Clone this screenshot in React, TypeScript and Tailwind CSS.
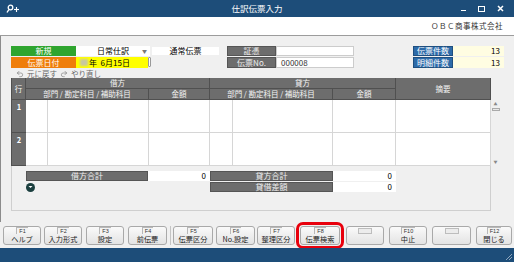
import React from "react";
import { Undo2, Redo2 } from "lucide-react";

const hdr =
  "bg-[#6d6d6d] text-[#f4f4f4] border-r border-b border-[#505050] flex items-center justify-center text-[7.5px] leading-none";

function FKey({ k, label, className = "" }: { k?: string; label?: string; className?: string }) {
  return (
    <div
      className={`h-[19px] shrink-0 rounded-[3px] border border-[#a9a9a9] bg-gradient-to-b from-[#fafafa] to-[#e3e3e3] flex flex-col items-center overflow-hidden ${className}`}
    >
      {k ? (
        <div className="h-[7px] px-[2px] border-t border-l border-[#b8b8b8] bg-[#f3f3f3] font-['Liberation_Sans',sans-serif] text-[5.5px] leading-[6px] text-[#333]">
          {k}
        </div>
      ) : (
        <div className="mt-[1px] h-[6px] w-[14px] border border-[#bdbdbd] bg-[#ececec]" />
      )}
      {label ? (
        <div className="h-[10px] text-[7.2px] leading-[10px] text-[#222] whitespace-nowrap">{label}</div>
      ) : null}
    </div>
  );
}

export default function App() {
  return (
    <div className="w-[514px] h-[262px] bg-[#f0f0f0] flex flex-col overflow-hidden font-['Noto_Sans_CJK_JP','Noto_Sans',sans-serif] text-[8px] text-black">
      {/* Title bar */}
      <div className="h-[17px] shrink-0 bg-[#1d4d79] relative flex items-center text-white">
        <svg width="14" height="10" viewBox="0 0 14 10" className="ml-[6px]">
          <circle cx="4.5" cy="3.5" r="2.3" fill="none" stroke="white" strokeWidth="1.3" />
          <line x1="3" y1="5.3" x2="1" y2="8.5" stroke="white" strokeWidth="1.4" />
          <line x1="8" y1="5.5" x2="13" y2="5.5" stroke="white" strokeWidth="1.1" />
          <line x1="10.5" y1="3" x2="10.5" y2="8" stroke="white" strokeWidth="1.1" />
        </svg>
        <div className="absolute left-0 right-0 text-center text-[8.5px] leading-none">仕訳伝票入力</div>
        <div className="ml-auto flex items-center gap-[12px] mr-[10px]">
          <div className="w-[5px] h-[1.5px] bg-white mt-[4px]" />
          <div className="w-[7px] h-[6px] border-[1.5px] border-white" />
          <svg width="7" height="7" viewBox="0 0 7 7">
            <path d="M1 1L6 6M6 1L1 6" stroke="white" strokeWidth="1.5" />
          </svg>
        </div>
      </div>

      {/* Company band */}
      <div className="h-[19px] shrink-0 bg-white border-b border-[#9c9c9c] flex items-center justify-end pr-[11px] text-[7.5px] text-[#333] tracking-[0.5px]">
        ＯＢＣ商事株式会社
      </div>

      {/* Main */}
      <div className="h-[186px] shrink-0 border-l border-[#8c8c8c] pt-[10px] pl-[10px] flex flex-col">
        {/* header rows */}
        <div className="flex h-[22px]">
          <div className="flex flex-col gap-[1px]">
            <div className="flex h-[10px]">
              <div className="w-[65px] bg-[#2fa52f] text-white flex items-center justify-center leading-none">新規</div>
              <div className="w-[74px] bg-white flex items-center justify-center relative leading-none">
                日常仕訳
                <span className="absolute right-[3px] top-[2px] text-[5px] text-[#777]">▼</span>
              </div>
              <div className="ml-[2px] mt-[1px] w-[67px] h-[8px] bg-white flex items-center justify-center leading-none">
                通常伝票
              </div>
            </div>
            <div className="flex h-[11px]">
              <div className="w-[65px] bg-[#ef7e0b] text-white flex items-center justify-center leading-none">伝票日付</div>
              <div className="w-[72px] bg-[#ffff00] flex items-center pl-[4px] leading-none">
                <span className="w-[8px] h-[7px] bg-[#c8c8a0] blur-[1px] mr-[1px]" />
                年&nbsp;&nbsp;6月15日
              </div>
              <div className="w-[3px] h-[10px] border border-[#999] bg-white rounded-[1px]" />
            </div>
          </div>

          <div className="ml-[8px] flex flex-col gap-[1px]">
            <div className="flex h-[10px]">
              <div className="w-[49px] bg-[#6d6d6d] text-[#eee] flex items-center justify-center leading-none border border-[#555]">証憑</div>
              <div className="w-[78px] bg-white border border-[#ccc]" />
            </div>
            <div className="flex h-[11px]">
              <div className="w-[49px] bg-[#6d6d6d] text-[#eee] flex items-center justify-center leading-none border border-[#555]">伝票No.</div>
              <div className="w-[78px] bg-white border border-[#ccc] flex items-center pl-[4px] leading-none text-[#333]">000008</div>
            </div>
          </div>

          <div className="ml-auto mr-[10px] flex flex-col gap-[1px]">
            <div className="flex h-[10px]">
              <div className="w-[40px] bg-[#2d6ba9] text-white flex items-center justify-center leading-none border border-[#1f4f80]">伝票件数</div>
              <div className="w-[51px] bg-[#fffde2] flex items-center justify-end pr-[4px] leading-none">13</div>
            </div>
            <div className="flex h-[11px]">
              <div className="w-[40px] bg-[#2d6ba9] text-white flex items-center justify-center leading-none border border-[#1f4f80]">明細件数</div>
              <div className="w-[51px] bg-[#fffde2] flex items-center justify-end pr-[4px] leading-none">13</div>
            </div>
          </div>
        </div>

        {/* undo row */}
        <div className="h-[10px] flex items-center pl-[5px] pt-[1px] text-[7.5px] text-[#666] leading-none">
          <Undo2 size={8} strokeWidth={1.6} className="text-[#666]" />
          <span className="ml-[3px] underline">元に戻す</span>
          <Redo2 size={8} strokeWidth={1.6} className="ml-[3px] text-[#666]" />
          <span className="ml-[3px] underline">やり直し</span>
        </div>

        {/* table */}
        <div className="flex">
          <div className="w-[480px] flex flex-col">
            <div className="flex h-[22px]">
              <div className={`${hdr} w-[15px] h-[22px] border-l`}>行</div>
              <div className="w-[184px] flex flex-col">
                <div className={`${hdr} h-[11px]`}>借方</div>
                <div className="flex h-[11px]">
                  <div className={`${hdr} w-[123px]`}>部門 / 勘定科目 / 補助科目</div>
                  <div className={`${hdr} w-[61px]`}>金額</div>
                </div>
              </div>
              <div className="w-[186px] flex flex-col">
                <div className={`${hdr} h-[11px]`}>貸方</div>
                <div className="flex h-[11px]">
                  <div className={`${hdr} w-[123px]`}>部門 / 勘定科目 / 補助科目</div>
                  <div className={`${hdr} w-[63px]`}>金額</div>
                </div>
              </div>
              <div className={`${hdr} w-[95px] h-[22px]`}>摘要</div>
            </div>
            {["1", "2"].map((n) => (
              <div key={n} className="flex h-[33px]">
                <div className="w-[15px] bg-[#6d6d6d] border-b border-l border-[#505050] text-white font-bold text-[7.5px] flex justify-center pt-[3px] leading-none">
                  {n}
                </div>
                <div className="w-[22px] bg-white border-r border-b border-[#d6d6d6]" />
                <div className="w-[101px] bg-white border-r border-b border-[#d6d6d6]" />
                <div className="w-[61px] bg-white border-r border-b border-[#d6d6d6]" />
                <div className="w-[23px] bg-white border-r border-b border-[#d6d6d6]" />
                <div className="w-[100px] bg-white border-r border-b border-[#d6d6d6]" />
                <div className="w-[63px] bg-white border-r border-b border-[#d6d6d6]" />
                <div className="w-[95px] bg-white border-r border-b border-[#d6d6d6]" />
              </div>
            ))}
            {/* totals */}
            <div className="h-[45px] border-x border-b border-[#cfcfcf] pt-[5px] flex flex-col gap-[1px]">
              <div className="flex h-[10px] ml-[14px]">
                <div className="w-[122px] bg-[#6d6d6d] text-[#eee] flex items-center justify-center leading-none border border-[#555]">借方合計</div>
                <div className="w-[62px] bg-white flex items-center justify-end pr-[4px] leading-none">0</div>
                <div className="w-[123px] bg-[#6d6d6d] text-[#eee] flex items-center justify-center leading-none border border-[#555]">貸方合計</div>
                <div className="w-[63px] bg-white flex items-center justify-end pr-[4px] leading-none">0</div>
              </div>
              <div className="flex h-[10px] ml-[14px]">
                <div className="w-[184px] flex items-center">
                  <div className="w-[9px] h-[9px] rounded-full bg-[#1b3f3f] flex items-center justify-center">
                    <svg width="5" height="4" viewBox="0 0 5 4">
                      <path d="M0.5 1L2.5 3L4.5 1Z" fill="white" />
                    </svg>
                  </div>
                </div>
                <div className="w-[123px] bg-[#6d6d6d] text-[#eee] flex items-center justify-center leading-none border border-[#555]">貸借差額</div>
                <div className="w-[63px] bg-white flex items-center justify-end pr-[4px] leading-none">0</div>
              </div>
            </div>
          </div>
          {/* scrollbar */}
          <div className="mt-[22px] w-[9px] h-[66px] flex flex-col items-center pt-[2px] text-[#888]">
            <span className="text-[4px] leading-none">▲</span>
            <div className="mt-[2px] w-[8px] h-[3px] border border-[#aaa] bg-[#e8e8e8]" />
            <span className="mt-auto mb-[2px] text-[4px] leading-none">▼</span>
          </div>
        </div>
      </div>

      {/* Function keys */}
      <div className="h-[26px] shrink-0 pt-[4px] flex items-start">
        <FKey k="F1" label="ヘルプ" className="ml-[3px] w-[38px]" />
        <FKey k="F2" label="入力形式" className="ml-[3px] w-[38px]" />
        <FKey k="F3" label="設定" className="ml-[4px] w-[38px]" />
        <FKey k="F4" label="前伝票" className="ml-[4px] w-[39px]" />
        <div className="ml-[3px] w-[1px] h-[19px] bg-[#c4c4c4]" />
        <FKey k="F5" label="伝票区分" className="ml-[2px] w-[40px]" />
        <FKey k="F6" label="No.設定" className="ml-[3px] w-[39px]" />
        <FKey k="F7" label="整理区分" className="ml-[2px] w-[38px]" />
        <FKey
          k="F8"
          label="伝票検索"
          className="ml-[5px] w-[40px] outline-[3px] outline-solid outline-[#e8000c] outline-offset-[1px]"
        />
        <FKey className="ml-[6px] w-[38px]" />
        <FKey k="F10" label="中止" className="ml-[5px] w-[38px]" />
        <FKey className="ml-[5px] w-[39px]" />
        <FKey k="F12" label="閉じる" className="ml-[5px] w-[36px]" />
      </div>

      {/* Status bar */}
      <div className="h-[14px] shrink-0 bg-[#1d4d79] flex justify-end items-end">
        <svg width="8" height="8" viewBox="0 0 8 8" className="mr-[1px] mb-[1px]">
          <path d="M7 1L1 7M7 4L4 7" stroke="#8fa6bd" strokeWidth="1" />
        </svg>
      </div>
    </div>
  );
}
